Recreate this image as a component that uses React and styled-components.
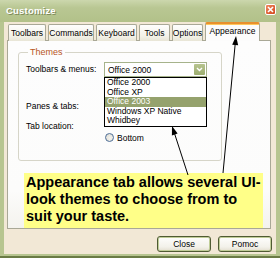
import React from 'react';
import styled, { createGlobalStyle, css } from 'styled-components';

const GlobalStyle = createGlobalStyle`
  html, body { margin: 0; padding: 0; }
  body {
    font-family: "Liberation Sans", Arial, sans-serif;
    font-size: 8.5px;
    color: #000;
  }
`;

const Window = styled.div`
  position: relative;
  width: 280px;
  height: 258px;
  display: flex;
  flex-direction: column;
  background: #b7c590;
  border-bottom: 2px solid #6a7b45;
  box-sizing: border-box;
  overflow: hidden;
`;

const TitleBar = styled.div`
  height: 22px;
  flex: none;
  display: flex;
  align-items: flex-start;
  justify-content: space-between;
  padding: 0 4px 0 6px;
  background: linear-gradient(#ccd7ad, #b9c793 35%, #b2c189);
  box-sizing: border-box;
`;

const Title = styled.span`
  margin-top: 5px;
  color: #fff;
  font-weight: bold;
  font-size: 9.5px;
  letter-spacing: 0.2px;
  text-shadow: 1px 1px 0 #7d8a5a;
`;

const CloseBox = styled.div`
  margin-top: 4px;
  width: 11px;
  height: 11px;
  box-sizing: border-box;
  border: 1px solid #fff;
  border-radius: 2px;
  background: linear-gradient(135deg, #f08a60, #d2461c);
  display: flex;
  align-items: center;
  justify-content: center;
`;

const Body = styled.div`
  flex: 1;
  display: flex;
  flex-direction: column;
  margin: 0 4px 2px 4px;
  background: #f2e8d6;
`;

const TabStrip = styled.div`
  display: flex;
  align-items: flex-end;
  gap: 2px;
  height: 19px;
  padding-left: 4px;
  margin-bottom: -1px;
  position: relative;
  z-index: 1;
`;

const Tab = styled.div`
  width: ${({ w }) => w}px;
  height: 17px;
  box-sizing: border-box;
  display: flex;
  align-items: center;
  justify-content: center;
  border: 1px solid #a9a896;
  border-bottom: none;
  border-radius: 2px 2px 0 0;
  background: linear-gradient(#fefefd, #f3f1e8 70%, #e8e5d6);
  padding-bottom: 1px;
  ${({ active }) => active && css`
    height: 19px;
    background: #fcfcfc;
    border-top: 2px solid #e8902e;
    box-shadow: inset 0 1px 0 #ffc75a;
    padding-bottom: 3px;
  `}
`;

const Panel = styled.div`
  flex: 1;
  margin: 0 5px 0 3px;
  padding: 6px 0 0 10px;
  border: 1px solid #a9a896;
  background: linear-gradient(#fdfdfd, #fcfcfb 80%, #f4f3ee);
`;

const GroupBox = styled.fieldset`
  margin: 0;
  width: 204px;
  height: 114px;
  box-sizing: border-box;
  padding: 0 0 0 7px;
  border: 1px solid #d6d5c8;
  border-radius: 3px;
`;

const Legend = styled.legend`
  margin-left: 2px;
  padding: 0 2px;
  font-size: 9px;
  line-height: 10px;
  color: #b8561d;
`;

const Row = styled.div`
  display: flex;
  align-items: ${({ top }) => (top ? 'flex-start' : 'center')};
  height: 15px;
  margin-top: ${({ gap }) => gap}px;
`;

const Label = styled.span`
  width: 78px;
  flex: none;
  line-height: 15px;
`;

const SelectWrap = styled.div`
  position: relative;
  width: 103px;
  height: 15px;
`;

const SelectBox = styled.div`
  height: 15px;
  box-sizing: border-box;
  display: flex;
  align-items: center;
  justify-content: space-between;
  padding: 0 1px 0 3px;
  border: 1px solid #a6b38b;
  background: #fff;
`;

const DropButton = styled.div`
  width: 11px;
  height: 11px;
  border-radius: 1px;
  background: linear-gradient(#b7c48f, #9cad6f);
  display: flex;
  align-items: center;
  justify-content: center;
`;

const Popup = styled.div`
  position: absolute;
  top: 100%;
  left: 0;
  width: 103px;
  box-sizing: border-box;
  border: 1px solid #000;
  background: #fff;
  z-index: 2;
`;

const Option = styled.div`
  height: 9.6px;
  line-height: 9.6px;
  padding-left: 2px;
  white-space: nowrap;
  ${({ selected }) => selected && css`
    background: #95a26d;
    color: #fff;
  `}
`;

const RadioColumn = styled.div`
  padding-top: 13px;
`;

const Radio = styled.label`
  display: flex;
  align-items: center;
  gap: 3px;
  height: 11px;
  margin-left: 1px;
`;

const RadioCircle = styled.span`
  width: 9px;
  height: 9px;
  box-sizing: border-box;
  border-radius: 50%;
  border: 1px solid #4d6e97;
  background: radial-gradient(circle at 60% 60%, #f4f3ee, #dcdad0);
`;

const Note = styled.div`
  position: relative;
  width: 239px;
  height: 55px;
  margin: 12px 0 0 6px;
  padding: 1px 0 0 2px;
  box-sizing: border-box;
  background: #ffff88;
  font-size: 14.5px;
  font-weight: bold;
  line-height: 17px;
`;

const ButtonRow = styled.div`
  display: flex;
  justify-content: flex-end;
  gap: 7px;
  height: 25px;
  padding: 7px 4px 0 0;
  box-sizing: border-box;
`;

const Button = styled.button`
  width: 54px;
  height: 16px;
  padding: 0;
  font: inherit;
  color: #000;
  border: 1px solid #4f5b33;
  border-radius: 3px;
  background: linear-gradient(#fefefd, #f3f1ea 70%, #e3dfd0);
  box-shadow: inset 0 0 0 1px #c0cd98;
`;

const Overlay = styled.svg`
  position: absolute;
  top: 0;
  left: 0;
  pointer-events: none;
  z-index: 5;
`;

const tabs = [
  { label: 'Toolbars', w: 38 },
  { label: 'Commands', w: 46 },
  { label: 'Keyboard', w: 41 },
  { label: 'Tools', w: 31 },
  { label: 'Options', w: 31 },
  { label: 'Appearance', w: 55, active: true },
];

const themes = ['Office 2000', 'Office XP', 'Office 2003', 'Windows XP Native', 'Whidbey'];

const App = () => (
  <>
    <GlobalStyle />
    <Window>
      <TitleBar>
        <Title>Customize</Title>
        <CloseBox>
          <svg width="7" height="7" viewBox="0 0 7 7">
            <path d="M1 1L6 6M6 1L1 6" stroke="#fff" strokeWidth="1.6" />
          </svg>
        </CloseBox>
      </TitleBar>
      <Body>
        <TabStrip>
          {tabs.map((t) => (
            <Tab key={t.label} w={t.w} active={t.active}>{t.label}</Tab>
          ))}
        </TabStrip>
        <Panel>
          <GroupBox>
            <Legend>Themes</Legend>
            <Row gap={5}>
              <Label>Toolbars &amp; menus:</Label>
              <SelectWrap>
                <SelectBox>
                  <span>Office 2000</span>
                  <DropButton>
                    <svg width="7" height="5" viewBox="0 0 7 5">
                      <path d="M1 1L3.5 3.5L6 1" stroke="#fff" strokeWidth="1.4" fill="none" />
                    </svg>
                  </DropButton>
                </SelectBox>
                <Popup>
                  {themes.map((name) => (
                    <Option key={name} selected={name === 'Office 2003'}>{name}</Option>
                  ))}
                </Popup>
              </SelectWrap>
            </Row>
            <Row gap={22}>
              <Label>Panes &amp; tabs:</Label>
            </Row>
            <Row gap={5} top>
              <Label>Tab location:</Label>
              <RadioColumn>
                <Radio>
                  <RadioCircle />
                  Bottom
                </Radio>
              </RadioColumn>
            </Row>
          </GroupBox>
          <Note>
            Appearance tab allows several UI-look themes to choose from to suit your taste.
          </Note>
        </Panel>
        <ButtonRow>
          <Button>Close</Button>
          <Button>Pomoc</Button>
        </ButtonRow>
      </Body>
      <Overlay width="280" height="258" viewBox="0 0 280 258">
        <line x1="223" y1="173" x2="235.2" y2="44" stroke="#000" strokeWidth="1" />
        <path d="M236 36L238.2 45.2L232.2 44.7Z" fill="#000" />
        <line x1="188" y1="175" x2="174.7" y2="134" stroke="#000" strokeWidth="1" />
        <path d="M172 126L177.6 133.6L171.9 135.5Z" fill="#000" />
      </Overlay>
    </Window>
  </>
);

export default App;
